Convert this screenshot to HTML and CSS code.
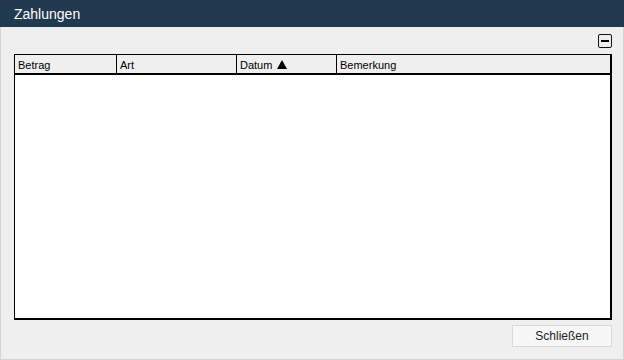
FILE: index.html
```html
<!DOCTYPE html>
<html lang="de">

<head>
    <meta charset="UTF-8">
    <title>Zahlungen</title>
    <link rel="stylesheet" href="styles.css">
</head>

<body>
    <div id="window">
        <div id="title">Zahlungen</div>
        <div id="content">
            <div id="tools">
                <div id="collapse"><span></span></div>
            </div>
            <div id="grid">
                <div id="header">
                    <div class="col col-betrag">Betrag</div>
                    <div class="col col-art">Art</div>
                    <div class="col col-datum">Datum <span class="sort"></span></div>
                    <div class="col col-bemerkung">Bemerkung</div>
                </div>
                <div id="rows"></div>
            </div>
            <div id="footer">
                <button id="close">Schließen</button>
            </div>
        </div>
    </div>
</body>

</html>
```

FILE: styles.css
```css
body {
    margin: 0;
    font-family: "Liberation Sans", Arial, sans-serif;
}

#window {
    width: 624px;
    height: 360px;
    box-sizing: border-box;
    border: 1px solid #d4d4d4;
    border-top: none;
    background-color: #efefef;
    display: flex;
    flex-direction: column;
}

#title {
    height: 27px;
    margin: 0 -1px;
    padding-left: 14px;
    background-color: #223a50;
    color: #fff;
    font-size: 14px;
    line-height: 28px;
}

#content {
    flex: 1;
    display: flex;
    flex-direction: column;
    padding: 7px 11px 12px 13px;
}

#tools {
    display: flex;
    justify-content: flex-end;
    margin-bottom: 6px;
}

#collapse {
    width: 14px;
    height: 14px;
    box-sizing: border-box;
    border: 1px solid #111;
    border-radius: 2px;
    display: flex;
    align-items: center;
    justify-content: center;
}

#collapse>span {
    width: 8px;
    height: 2px;
    background-color: #000;
}

#grid {
    height: 266px;
    box-sizing: border-box;
    border: 1px solid #000;
    border-right-width: 2px;
    border-bottom-width: 2px;
    background-color: #fff;
    display: flex;
    flex-direction: column;
}

#header {
    height: 18px;
    display: flex;
    background-color: #efefef;
    border-bottom: 2px solid #000;
    font-size: 11px;
    color: #000;
}

#header>.col {
    box-sizing: border-box;
    padding-left: 3px;
    line-height: 20px;
    border-right: 1px solid #000;
    white-space: nowrap;
}

.col-betrag {
    width: 102px;
}

.col-art {
    width: 120px;
}

.col-datum {
    width: 100px;
}

#header>.col-bemerkung {
    flex: 1;
    border-right: none;
}

/* Sortierpfeil */
.sort {
    display: inline-block;
    width: 0;
    height: 0;
    margin-left: 2px;
    border-left: 5px solid transparent;
    border-right: 5px solid transparent;
    border-bottom: 9px solid #000;
}

#rows {
    flex: 1;
}

#footer {
    display: flex;
    justify-content: flex-end;
    margin-top: 5px;
}

#close {
    width: 100px;
    height: 22px;
    border: 1px solid #d9d9d9;
    background-color: #f7f7f7;
    font-family: "Liberation Sans", Arial, sans-serif;
    font-size: 12px;
    color: #222;
    padding: 0;
}
```
